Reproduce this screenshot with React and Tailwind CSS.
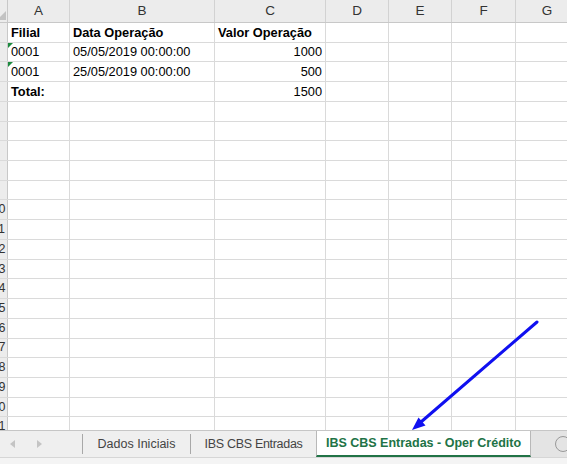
import React from "react";

const cols = [
  { key: "A", w: "w-[62px]" },
  { key: "B", w: "w-[145px]" },
  { key: "C", w: "w-[111px]" },
  { key: "D", w: "w-[63px]" },
  { key: "E", w: "w-[63px]" },
  { key: "F", w: "w-[64px]" },
  { key: "G", w: "w-[63px]" },
];

const data = {
  1: [
    { t: "Filial", b: true },
    { t: "Data Operação", b: true },
    { t: "Valor Operação", b: true },
  ],
  2: [{ t: "0001", flag: true }, { t: "05/05/2019 00:00:00" }, { t: "1000", r: true }],
  3: [{ t: "0001", flag: true }, { t: "25/05/2019 00:00:00" }, { t: "500", r: true }],
  4: [{ t: "Total:", b: true }, { t: "" }, { t: "1500", r: true }],
};

const rows = Array.from({ length: 21 }, (_, i) => i + 1);

const Cell = ({ col, cell }) => (
  <div
    className={`${col.w} shrink-0 h-full relative flex items-center px-[3px] border-r border-[#dadada] text-[12.8px] text-black whitespace-nowrap overflow-visible ${
      cell && cell.r ? "justify-end" : "justify-start"
    } ${cell && cell.b ? "font-bold" : ""}`}
  >
    {cell && cell.flag && (
      <span className="absolute left-0 top-0 w-0 h-0 border-t-[5px] border-r-[5px] border-t-[#1d8a3f] border-r-transparent" />
    )}
    {cell ? cell.t : ""}
  </div>
);

const App = () => {
  return (
    <div className="w-[567px] h-[464px] relative overflow-hidden bg-white font-['Liberation_Sans',Arial,sans-serif]">
      {/* grade */}
      <div className="h-[430px] overflow-hidden flex flex-col">
        <div className="h-[23px] shrink-0 flex border-b border-[#c8c8c8] bg-[#ececec]">
          <div className="w-[8px] shrink-0 border-r border-[#c8c8c8] relative">
            <span className="absolute right-[1px] bottom-[2px] w-0 h-0 border-b-[9px] border-l-[9px] border-b-[#c2c2c2] border-l-transparent" />
          </div>
          {cols.map((c) => (
            <div
              key={c.key}
              className={`${c.w} shrink-0 flex items-center justify-center border-r border-[#d2d2d2] text-[13.5px] text-[#333]`}
            >
              {c.key}
            </div>
          ))}
        </div>
        {rows.map((r) => (
          <div key={r} className="h-[19.73px] shrink-0 flex border-b border-[#dadada]">
            <div className="w-[8px] shrink-0 overflow-hidden flex justify-end items-center bg-[#ececec] border-r border-[#c8c8c8]">
              <span className="w-[17px] shrink-0 text-center text-[12.5px] text-[#333]">
                {r >= 10 ? r : ""}
              </span>
            </div>
            {cols.map((c, i) => (
              <Cell key={c.key} col={c} cell={data[r] ? data[r][i] : null} />
            ))}
          </div>
        ))}
      </div>

      {/* abas */}
      <div className="h-[34px] flex flex-col border-t border-[#c6c6c6] bg-[#efefef]">
        <div className="h-[26px] flex items-stretch text-[12.5px] text-[#444]">
          <div className="w-[82px] shrink-0 flex items-center gap-[22px] pl-[10px]">
            <svg width="5" height="8" viewBox="0 0 5 8">
              <path d="M5 0 L0 4 L5 8 Z" fill="#c4c4c4" />
            </svg>
            <svg width="5" height="8" viewBox="0 0 5 8">
              <path d="M0 0 L5 4 L0 8 Z" fill="#c4c4c4" />
            </svg>
          </div>
          <div className="w-[108px] shrink-0 flex items-center justify-center my-[3px] border-l border-[#a8a8a8]">
            Dados Iniciais
          </div>
          <div className="w-[126px] shrink-0 flex items-center justify-center my-[3px] border-l border-[#a8a8a8] tracking-[-0.3px]">
            IBS CBS Entradas
          </div>
          <div className="w-[215px] shrink-0 flex items-center justify-center bg-white border-x border-[#b8b8b8] border-b-2 border-b-[#217346] text-[#217346] font-bold text-[12.5px]">
            IBS CBS Entradas - Oper Crédito
          </div>
          <div className="flex-1 flex items-center pl-[24px] bg-[#e4e4e4] border-r border-[#c8c8c8]">
            <span className="w-[16px] h-[16px] shrink-0 rounded-full border border-[#999]" />
          </div>
        </div>
        <div className="flex-1 border-t border-[#d6d6d6] bg-[#f4f4f4]" />
      </div>

      {/* seta */}
      <svg className="absolute left-0 top-0 pointer-events-none" width="567" height="464">
        <line x1="537" y1="322" x2="421" y2="422" stroke="#1010f0" strokeWidth="3" strokeLinecap="round" />
        <polygon points="412,430 425.5,425.5 418.5,417.5" fill="#1010f0" />
      </svg>
    </div>
  );
};

export default App;
